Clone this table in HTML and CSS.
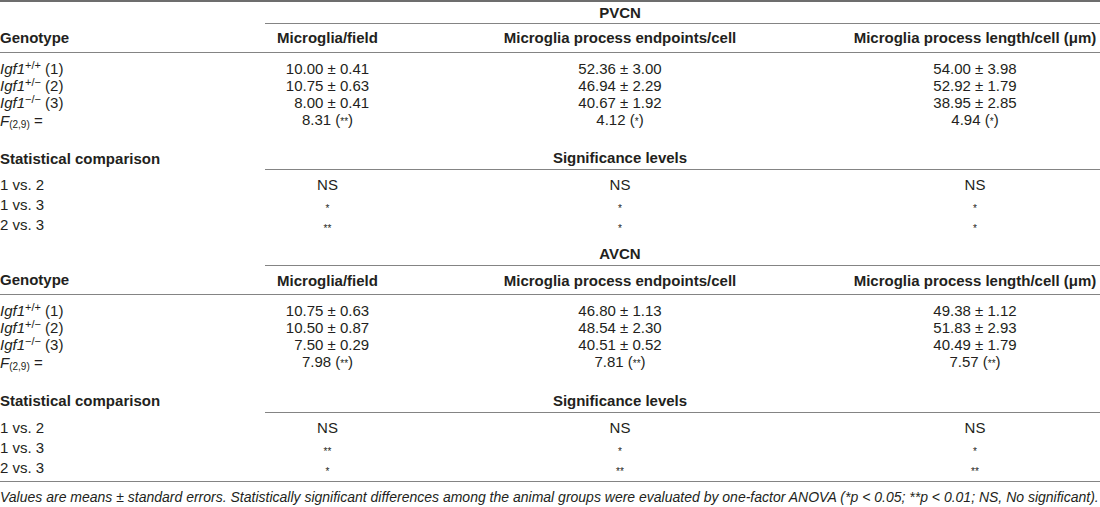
FILE: index.html
```html
<!DOCTYPE html>
<html>
<head>
<meta charset="utf-8">
<link rel="stylesheet" href="styles.css">
</head>
<body>
<div class="wrap">
<table class="stats">
  <colgroup>
    <col class="c1"><col class="c2"><col class="c3"><col class="c4">
  </colgroup>
  <tbody class="sec first">
    <tr class="title">
      <td></td><td class="rule"></td><th class="rule">PVCN</th><td class="rule"></td>
    </tr>
    <tr class="head">
      <th class="lbl">Genotype</th><th>Microglia/field</th><th>Microglia process endpoints/cell</th><th>Microglia process length/cell (μm)</th>
    </tr>
    <tr class="data top">
      <td class="lbl"><i>Igf1</i><sup>+/+</sup> (1)</td><td>10.00 ± 0.41</td><td>52.36 ± 3.00</td><td>54.00 ± 3.98</td>
    </tr>
    <tr class="data">
      <td class="lbl"><i>Igf1</i><sup>+/−</sup> (2)</td><td>10.75 ± 0.63</td><td>46.94 ± 2.29</td><td>52.92 ± 1.79</td>
    </tr>
    <tr class="data">
      <td class="lbl"><i>Igf1</i><sup>−/−</sup> (3)</td><td>&#8199;8.00 ± 0.41</td><td>40.67 ± 1.92</td><td>38.95 ± 2.85</td>
    </tr>
    <tr class="data">
      <td class="lbl"><i>F</i><sub>(2,9)</sub> =</td><td>8.31 (<span class="ast">**</span>)</td><td>4.12 (<span class="ast">*</span>)</td><td>4.94 (<span class="ast">*</span>)</td>
    </tr>
    <tr class="subhead">
      <th class="lbl">Statistical comparison</th><td class="rule"></td><th class="rule">Significance levels</th><td class="rule"></td>
    </tr>
    <tr class="cmp top">
      <td class="lbl">1 vs. 2</td><td>NS</td><td>NS</td><td>NS</td>
    </tr>
    <tr class="cmp">
      <td class="lbl">1 vs. 3</td><td><span class="mark">*</span></td><td><span class="mark">*</span></td><td><span class="mark">*</span></td>
    </tr>
    <tr class="cmp end">
      <td class="lbl">2 vs. 3</td><td><span class="mark">**</span></td><td><span class="mark">*</span></td><td><span class="mark">*</span></td>
    </tr>
  </tbody>
  <tbody class="sec">
    <tr class="title">
      <td></td><td class="rule"></td><th class="rule">AVCN</th><td class="rule"></td>
    </tr>
    <tr class="head">
      <th class="lbl">Genotype</th><th>Microglia/field</th><th>Microglia process endpoints/cell</th><th>Microglia process length/cell (μm)</th>
    </tr>
    <tr class="data top">
      <td class="lbl"><i>Igf1</i><sup>+/+</sup> (1)</td><td>10.75 ± 0.63</td><td>46.80 ± 1.13</td><td>49.38 ± 1.12</td>
    </tr>
    <tr class="data">
      <td class="lbl"><i>Igf1</i><sup>+/−</sup> (2)</td><td>10.50 ± 0.87</td><td>48.54 ± 2.30</td><td>51.83 ± 2.93</td>
    </tr>
    <tr class="data">
      <td class="lbl"><i>Igf1</i><sup>−/−</sup> (3)</td><td>&#8199;7.50 ± 0.29</td><td>40.51 ± 0.52</td><td>40.49 ± 1.79</td>
    </tr>
    <tr class="data">
      <td class="lbl"><i>F</i><sub>(2,9)</sub> =</td><td>7.98 (<span class="ast">**</span>)</td><td>7.81 (<span class="ast">**</span>)</td><td>7.57 (<span class="ast">**</span>)</td>
    </tr>
    <tr class="subhead">
      <th class="lbl">Statistical comparison</th><td class="rule"></td><th class="rule">Significance levels</th><td class="rule"></td>
    </tr>
    <tr class="cmp top">
      <td class="lbl">1 vs. 2</td><td>NS</td><td>NS</td><td>NS</td>
    </tr>
    <tr class="cmp">
      <td class="lbl">1 vs. 3</td><td><span class="mark">**</span></td><td><span class="mark">*</span></td><td><span class="mark">*</span></td>
    </tr>
    <tr class="cmp last">
      <td class="lbl">2 vs. 3</td><td><span class="mark">*</span></td><td><span class="mark">**</span></td><td><span class="mark">**</span></td>
    </tr>
  </tbody>
</table>
<p class="note">Values are means ± standard errors. Statistically significant differences among the animal groups were evaluated by one-factor ANOVA (*<span>p</span> &lt; 0.05; **<span>p</span> &lt; 0.01; NS, No significant).</p>
</div>
</body>
</html>
```

FILE: styles.css
```css
* { box-sizing: border-box; }
html, body { margin: 0; padding: 0; background: #fff; }
body {
  font-family: "Liberation Sans", Arial, Helvetica, sans-serif;
  color: #231f20;
  font-size: 15px;
}
.wrap { width: 1100px; }
.stats {
  width: 1100px;
  border-collapse: collapse;
  table-layout: fixed;
  border-top: 2px solid #6d6d6d;
}
.c1 { width: 265px; }
.c2 { width: 125px; }
.c3 { width: 460px; }
.c4 { width: 250px; }
.stats td, .stats th {
  padding: 0;
  text-align: center;
  font-weight: normal;
  line-height: 17px;
  white-space: nowrap;
  vertical-align: middle;
}
.stats th { font-weight: bold; }
.stats .lbl { text-align: left; }
.rule { border-bottom: 1px solid #848484; }

.title td, .title th { height: 22px; }
.sec + .sec .title td, .sec + .sec .title th { height: 24px; }

.head th { height: 29px; border-bottom: 1px solid #848484; }

.data td { height: 17px; }
.data.top td { padding-top: 7px; height: 24px; }

.subhead th, .subhead td { height: 40px; vertical-align: bottom; padding-bottom: 3px; }

.cmp td { height: 20px; }
.cmp.top td { padding-top: 5px; height: 25px; }
.cmp.end td { padding-bottom: 7px; height: 27px; }
.cmp.last td { padding-bottom: 4px; height: 24px; }

sup, sub { line-height: 0; }
sup { font-size: 11px; vertical-align: 5px; }
sub { font-size: 10px; vertical-align: -2px; }
.ast { font-size: 10px; }
.mark {
  display: inline-block;
  font-size: 10px;
  line-height: 10px;
  vertical-align: -3px;
}
.note {
  margin: 0;
  border-top: 1px solid #848484;
  padding-top: 7px;
  font-style: italic;
  font-size: 14px;
  line-height: 16px;
  white-space: nowrap;
}
.note span { font-style: italic; }
```
